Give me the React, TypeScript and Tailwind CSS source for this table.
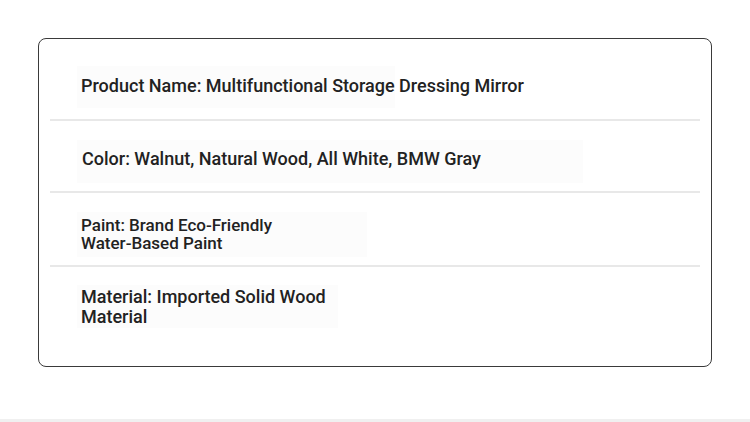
import React from "react";

const rows = [
  {
    key: "name",
    wrap: "pt-[27px] pb-[11px]",
    box: "h-[42px] w-[318px] pt-[9px] pl-[4px]",
    text: "text-[18px] leading-[22px]",
    lines: ["Product Name: Multifunctional Storage Dressing Mirror"],
  },
  {
    key: "color",
    wrap: "pt-[19px] pb-[8px]",
    box: "h-[43px] w-[506px] pt-[8px] pl-[5px]",
    text: "text-[18px] leading-[22px]",
    lines: ["Color: Walnut, Natural Wood, All White, BMW Gray"],
  },
  {
    key: "paint",
    wrap: "pt-[19px] pb-[8px]",
    box: "h-[45px] w-[290px] pt-[4px] pl-[4px]",
    text: "text-[17px] leading-[18px]",
    lines: ["Paint: Brand Eco-Friendly", "Water-Based Paint"],
  },
  {
    key: "material",
    wrap: "pt-[18px] pb-[38px]",
    box: "h-[43px] w-[261px] pt-[2px] pl-[4px]",
    text: "text-[18px] leading-[20px]",
    lines: ["Material: Imported Solid Wood", "Material"],
  },
];

const App = () => {
  return (
    <div
      className="w-[750px] h-[422px] bg-white overflow-hidden flex flex-col"
      style={{ fontFamily: "Roboto, 'Liberation Sans', sans-serif" }}
    >
      <div className="mt-[38px] mx-[38px] border-[1.5px] border-[#3a3a3a] rounded-[8px] px-[11px]">
        {rows.map((row, index) => (
          <div key={row.key}>
            {index > 0 && <div className="h-[2px] bg-[#e8e8e8]"></div>}
            <div className={row.wrap}>
              <div className={"ml-[27px] bg-[#fcfcfc] whitespace-nowrap font-medium text-[#222222] " + row.box}>
                <p className={row.text}>
                  {row.lines.map((line, i) => (
                    <React.Fragment key={i}>
                      {i > 0 && <br />}
                      {line}
                    </React.Fragment>
                  ))}
                </p>
              </div>
            </div>
          </div>
        ))}
      </div>
      <div className="mt-[52px] h-[4px] bg-[#f0f0f0]"></div>
    </div>
  );
};

export default App;
